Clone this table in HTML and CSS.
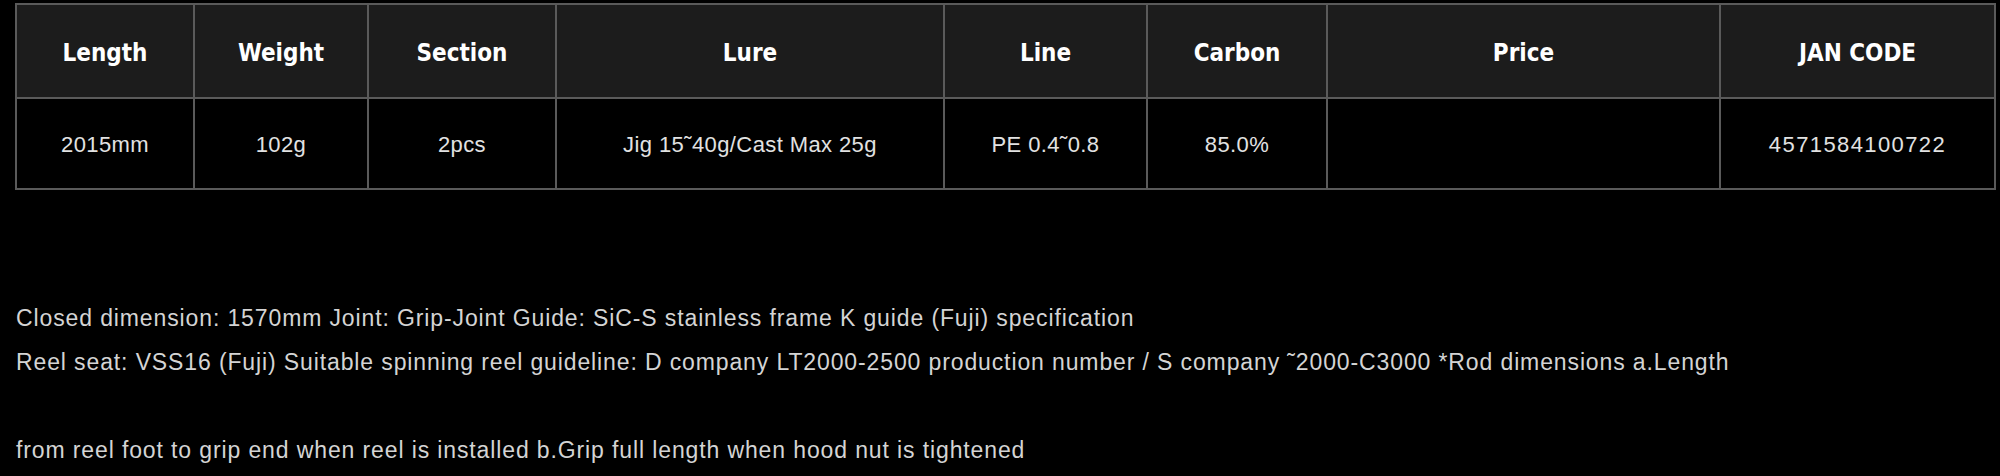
FILE: index.html
```html
<!DOCTYPE html>
<html lang="en">
<head>
<meta charset="utf-8">
<title>Spec</title>
<link rel="stylesheet" href="styles.css">
</head>
<body>
<div class="page">
  <table class="spec">
    <colgroup>
      <col class="c1"><col class="c2"><col class="c3"><col class="c4"><col class="c5"><col class="c6"><col class="c7"><col class="c8">
    </colgroup>
    <thead>
      <tr class="head">
        <th>Length</th><th>Weight</th><th>Section</th><th>Lure</th><th>Line</th><th>Carbon</th><th>Price</th><th>JAN CODE</th>
      </tr>
    </thead>
    <tbody>
      <tr class="body">
        <td>2015mm</td><td>102g</td><td>2pcs</td><td>Jig 15˜40g/Cast Max 25g</td><td>PE 0.4˜0.8</td><td>85.0%</td><td></td><td class="jan">4571584100722</td>
      </tr>
    </tbody>
  </table>
  <p class="notes">Closed dimension: 1570mm Joint: Grip-Joint Guide: SiC-S stainless frame K guide (Fuji) specification<br>Reel seat: VSS16 (Fuji) Suitable spinning reel guideline: D company LT2000-2500 production number / S company ˜2000-C3000 *Rod dimensions a.Length<br><br>from reel foot to grip end when reel is installed b.Grip full length when hood nut is tightened</p>
</div>
</body>
</html>
```
FILE: styles.css
```css
html, body {
  margin: 0;
  padding: 0;
  background: #000;
}
.page {
  padding: 3px 6px 0 15px;
  font-family: "Liberation Sans", Arial, sans-serif;
}
.spec {
  width: 1979px;
  border-collapse: collapse;
  table-layout: fixed;
  border: 2px solid #5a5a5a;
}
.c1 { width: 178px; }
.c2 { width: 174px; }
.c3 { width: 188px; }
.c4 { width: 388px; }
.c5 { width: 203px; }
.c6 { width: 180px; }
.c7 { width: 393px; }
.c8 { width: 275px; }
.spec th, .spec td {
  border: 2px solid #5a5a5a;
  text-align: center;
  vertical-align: middle;
  padding: 0;
}
.head {
  height: 94px;
  background: #1c1c1c;
}
.head th {
  color: #fff;
  font-weight: bold;
  font-size: 24px;
  padding-top: 4px;
  font-family: "DejaVu Sans Condensed", "Liberation Sans", sans-serif;
}
.body {
  height: 91px;
  background: #000;
}
.body td {
  color: #e2e2e2;
  font-size: 22px;
  letter-spacing: 0.4px;
  font-weight: normal;
  padding-top: 2px;
}
.body td.jan {
  letter-spacing: 1.4px;
}
.notes {
  margin: 106px 0 0 1px;
  color: #d4d4d4;
  font-size: 23px;
  letter-spacing: 0.88px;
  line-height: 44px;
}
```
